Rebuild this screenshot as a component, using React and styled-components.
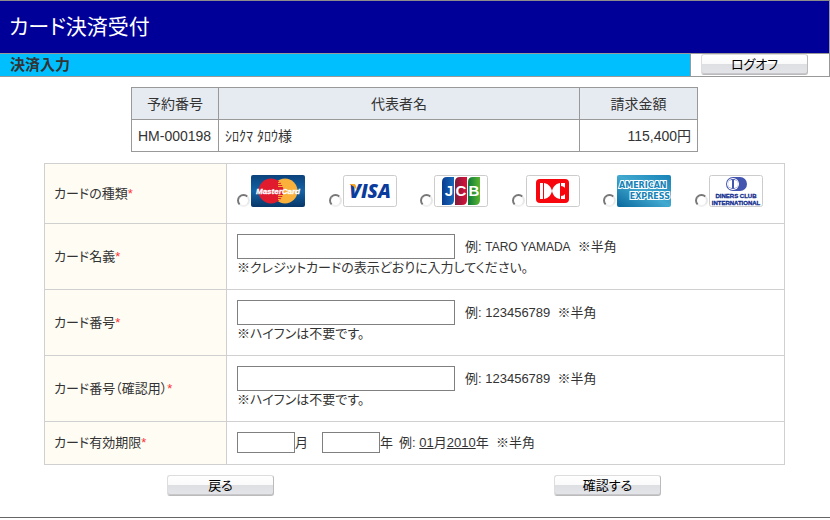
import React from "react";
import styled, { createGlobalStyle } from "styled-components";

const GlobalStyle = createGlobalStyle`
  body {
    margin: 0;
    background: #fff;
    color: #333;
    font-family: "Liberation Sans", "Noto Sans CJK JP", sans-serif;
    font-size: 13px;
    line-height: 18px;
    font-feature-settings: "palt";
  }

  input,
  button {
    font: inherit;
    font-feature-settings: inherit;
    box-sizing: border-box;
    margin: 0;
  }
`;

const Page = styled.div`
  border-top: 1px solid #8c8c8c;
  border-bottom: 1px solid #666;
`;

const Header = styled.header`
  display: flex;
  align-items: center;
  height: 52px;
  padding: 0 9px;
  background: #000099;
  border-right: 1px solid #999;
`;

const Title = styled.h1`
  margin: 0;
  color: #fff;
  font-size: 21px;
  font-weight: 400;
  line-height: 28px;
`;

const SubBar = styled.div`
  display: flex;
  border: 1px solid #999;
  border-left: 0;
`;

const SubTitle = styled.h2`
  flex: 1;
  margin: 0;
  padding: 0 10px;
  background: #00bfff;
  font-size: 15px;
  font-weight: 700;
  line-height: 22px;
`;

const LogoffBox = styled.div`
  width: 128px;
  padding-left: 10px;
  border-left: 1px solid #999;
`;

const Button = styled.button`
  display: block;
  width: 107px;
  height: 21px;
  padding: 0;
  border: 1px solid #ccc;
  border-color: #ddd #bbb #bbb #ddd;
  border-radius: 3px;
  box-shadow: inset 0 -1px 0 #c8c8cc;
  background: linear-gradient(#fff 0, #fafafa 48%, #dedfe3 50%, #e4e5e8 100%);
  color: #000;
  line-height: 18px;
`;

const Summary = styled.table`
  width: calc(100% - 263px);
  margin: 10px auto 0 131px;
  border-collapse: collapse;
  table-layout: fixed;
  font-size: 14px;

  th,
  td {
    box-sizing: border-box;
    height: 32px;
    padding: 0 6px;
    border: 1px solid #999;
    font-weight: 400;
    text-align: left;
  }

  th {
    background: #e6ebf1;
    text-align: center;
  }

  td:last-child {
    text-align: right;
  }
`;

const Col = styled.col`
  width: ${(p) => p.$width};
`;

const FormTable = styled.table`
  width: calc(100% - 89px);
  margin: 11px 45px 0 44px;
  border-collapse: collapse;
  table-layout: fixed;
`;

const LabelCell = styled.th`
  padding: 0 9px;
  border: 1px solid #d0d0d0;
  background: #fffdf3;
  font-weight: 400;
  text-align: left;
`;

const FieldCell = styled.td`
  padding: 10px 10px ${(p) => p.$bottom || "12px"};
  border: 1px solid #d0d0d0;
`;

const Required = styled.span`
  color: #f33;
`;

const Line = styled.div`
  display: flex;
  align-items: center;
`;

const TextInput = styled.input`
  width: 218px;
  height: 25px;
  padding: 0 4px;
  border: 1px solid #808080;
  background: #fff;
`;

const SmallInput = styled(TextInput)`
  width: 58px;
  height: 21px;
`;

const Example = styled.span`
  margin-left: ${(p) => p.$gap || "10px"};
  white-space: pre;
`;

const Month = styled.label`
  margin-right: 14px;
`;

const Name = styled.span`
  font-size: 12px;
`;

const Note = styled.div`
  line-height: 18px;
`;

const CardList = styled.div`
  display: flex;
  justify-content: space-between;
  padding: 1px 11px 0 0;
`;

const CardOption = styled.label`
  display: flex;
  align-items: flex-end;
  gap: 1px;
`;

const Radio = styled.input.attrs({ type: "radio" })`
  appearance: none;
  width: 13px;
  height: 13px;
  border: 2px solid;
  border-color: #777 #e8e8e8 #f0f0f0 #777;
  border-radius: 50%;
  background: #fff;

  &:checked {
    background: radial-gradient(#222 0 2px, #fff 3px);
  }
`;

const Logo = styled.svg`
  display: block;
  width: 54px;
  height: 32px;
  font-family: "Liberation Sans", sans-serif;
  font-weight: 700;
`;

const Actions = styled.div`
  display: grid;
  grid-template-columns: 1fr 1fr;
  justify-items: center;
  padding: 10px 29px 21px 27px;
`;

function Plate() {
  return (
    <rect x="0.5" y="0.5" width="53" height="31" rx="2" fill="#fff" stroke="#ccc" />
  );
}

function MasterCard() {
  return (
    <Logo viewBox="0 0 54 32" role="img" aria-label="MasterCard">
      <defs>
        <linearGradient id="mc" x1="0" y1="0" x2="0" y2="1">
          <stop offset="0" stopColor="#0b427c" />
          <stop offset="0.5" stopColor="#1463a4" />
          <stop offset="1" stopColor="#083668" />
        </linearGradient>
      </defs>
      <rect width="54" height="32" rx="2" fill="url(#mc)" />
      <circle cx="34" cy="16" r="12.5" fill="#f9b13b" />
      <circle cx="20" cy="16" r="12.5" fill="#e11b2e" />
      <path
        d="M27 7.500h2M27 9.500h4M27 11.500h5M27 20.500h5M27 22.500h4M27 24.500h2"
        stroke="#f9b13b"
        strokeWidth="1"
      />
      <text
        x="27"
        y="19"
        textAnchor="middle"
        fontSize="8"
        fontStyle="italic"
        fill="#fff"
        stroke="#fff"
        strokeWidth="0.3"
      >
        MasterCard
      </text>
    </Logo>
  );
}

function Visa() {
  return (
    <Logo viewBox="0 0 54 32" role="img" aria-label="VISA">
      <Plate />
      <text
        x="27"
        y="22.500"
        textAnchor="middle"
        fontSize="19"
        fontStyle="italic"
        fontFamily="Open Sans, sans-serif"
        fontWeight="800"
        fill="#0b3b9c"
      >
        VISA
      </text>
      <path d="M6 9h5q1.500 0 2 2l1 5C12.500 12.500 10 10.500 6 9z" fill="#f5a623" />
    </Logo>
  );
}

function Jcb() {
  return (
    <Logo viewBox="0 0 54 32" role="img" aria-label="JCB">
      <defs>
        <linearGradient id="jb">
          <stop offset="0" stopColor="#0b3d91" />
          <stop offset="1" stopColor="#1668b8" />
        </linearGradient>
        <linearGradient id="jr">
          <stop offset="0" stopColor="#7d1c3c" />
          <stop offset="1" stopColor="#db1138" />
        </linearGradient>
        <linearGradient id="jg">
          <stop offset="0" stopColor="#0b7a3a" />
          <stop offset="1" stopColor="#5bb531" />
        </linearGradient>
      </defs>
      <Plate />
      <path d="M13 2h7v23q0 5-5 5H8V7q0-5 5-5z" fill="url(#jb)" />
      <path d="M26 2h7v23q0 5-5 5h-7V7q0-5 5-5z" fill="url(#jr)" />
      <path d="M39 2h7v23q0 5-5 5h-7V7q0-5 5-5z" fill="url(#jg)" />
      <g fill="#fff" fontSize="15" textAnchor="middle">
        <text x="15" y="21">J</text>
        <text x="27" y="21">C</text>
        <text x="40" y="21">B</text>
      </g>
    </Logo>
  );
}

function Dc() {
  return (
    <Logo viewBox="0 0 54 32" role="img" aria-label="DC">
      <Plate />
      <rect x="10" y="4" width="33" height="24" rx="4" fill="#f8060d" />
      <path
        d="M14 8h3v16h-3zM18 8c5 1 7 4 8 8-1 4-3 7-8 8zM34 8c-5 1-7 4-8 8 1 4 3 7 8 8zM35 8h4v5c-1-1-2-2-4-2zM35 24h4v-5c-1 1-2 2-4 2z"
        fill="#fff"
      />
    </Logo>
  );
}

function Amex() {
  return (
    <Logo viewBox="0 0 54 32" role="img" aria-label="AMERICAN EXPRESS">
      <defs>
        <linearGradient id="ax" x1="1" y1="0" x2="0" y2="1">
          <stop offset="0" stopColor="#1682b6" />
          <stop offset="0.5" stopColor="#42a9cf" />
          <stop offset="1" stopColor="#08679d" />
        </linearGradient>
      </defs>
      <rect width="54" height="32" rx="2" fill="url(#ax)" />
      <g
        fontSize="8"
        fontFamily="DejaVu Sans, sans-serif"
        fill="#1682b6"
        stroke="#fff"
        strokeWidth="2"
        paintOrder="stroke"
      >
        <text x="2" y="13">AMERICAN</text>
        <text x="53" y="24" textAnchor="end">EXPRESS</text>
      </g>
    </Logo>
  );
}

function Diners() {
  return (
    <Logo viewBox="0 0 54 32" role="img" aria-label="DINERS CLUB INTERNATIONAL">
      <Plate />
      <rect x="17" y="2" width="21" height="14" rx="7" fill="#4355ae" />
      <circle cx="24" cy="9" r="6" fill="#fff" />
      <circle cx="24" cy="9" r="5" fill="#4355ae" />
      <path d="M23 5a4 4 0 0 0 0 8zM25 5a4 4 0 0 1 0 8z" fill="#fff" />
      <g
        fontSize="6"
        fill="#102a8c"
        stroke="#102a8c"
        strokeWidth="0.3"
        textAnchor="middle"
      >
        <text x="27" y="23">DINERS CLUB</text>
        <text x="27" y="30">INTERNATIONAL</text>
      </g>
    </Logo>
  );
}

const cards = [
  { id: "mastercard", Image: MasterCard },
  { id: "visa", Image: Visa },
  { id: "jcb", Image: Jcb },
  { id: "dc", Image: Dc },
  { id: "amex", Image: Amex },
  { id: "diners", Image: Diners },
];

const fields = [
  {
    id: "holder",
    label: "カード名義",
    example: <Name>TARO YAMADA</Name>,
    note: "※クレジットカードの表示どおりに入力してください。",
  },
  {
    id: "number",
    label: "カード番号",
    example: "123456789",
    note: "※ハイフンは不要です。",
  },
  {
    id: "confirm",
    label: "カード番号（確認用）",
    example: "123456789",
    note: "※ハイフンは不要です。",
  },
];

export default function App() {
  return (
    <Page>
      <GlobalStyle />
      <Header>
        <Title>カード決済受付</Title>
      </Header>
      <SubBar>
        <SubTitle>決済入力</SubTitle>
        <LogoffBox>
          <Button type="button">ログオフ</Button>
        </LogoffBox>
      </SubBar>

      <Summary>
        <colgroup>
          <Col $width="87px" />
          <Col />
          <Col $width="118px" />
        </colgroup>
        <thead>
          <tr>
            <th scope="col">予約番号</th>
            <th scope="col">代表者名</th>
            <th scope="col">請求金額</th>
          </tr>
        </thead>
        <tbody>
          <tr>
            <td>HM-000198</td>
            <td>ｼﾛｸﾏ ﾀﾛｳ様</td>
            <td>115,400円</td>
          </tr>
        </tbody>
      </Summary>

      <form onSubmit={(e) => e.preventDefault()}>
        <FormTable>
          <colgroup>
            <Col $width="182px" />
            <Col />
          </colgroup>
          <tbody>
            <tr>
              <LabelCell scope="row" id="card-type">
                カードの種類<Required>*</Required>
              </LabelCell>
              <FieldCell $bottom="16px">
                <CardList role="radiogroup" aria-labelledby="card-type">
                  {cards.map(({ id, Image }) => (
                    <CardOption key={id}>
                      <Radio name="card" value={id} />
                      <Image />
                    </CardOption>
                  ))}
                </CardList>
              </FieldCell>
            </tr>
            {fields.map((f) => (
              <tr key={f.id}>
                <LabelCell scope="row">
                  <label htmlFor={f.id}>
                    {f.label}
                    <Required>*</Required>
                  </label>
                </LabelCell>
                <FieldCell>
                  <Line>
                    <TextInput id={f.id} type="text" />
                    <Example>
                      例: {f.example}
                      {"  ※半角"}
                    </Example>
                  </Line>
                  <Note>{f.note}</Note>
                </FieldCell>
              </tr>
            ))}
            <tr>
              <LabelCell scope="row">
                カード有効期限<Required>*</Required>
              </LabelCell>
              <FieldCell $bottom="11px">
                <Line>
                  <SmallInput id="month" type="text" />
                  <Month htmlFor="month">月</Month>
                  <SmallInput id="year" type="text" />
                  <label htmlFor="year">年</label>
                  <Example $gap="6px">
                    例: <u>01</u>月<u>2010</u>年{"  ※半角"}
                  </Example>
                </Line>
              </FieldCell>
            </tr>
          </tbody>
        </FormTable>
        <Actions>
          <Button type="button">戻る</Button>
          <Button type="submit">確認する</Button>
        </Actions>
      </form>
    </Page>
  );
}
